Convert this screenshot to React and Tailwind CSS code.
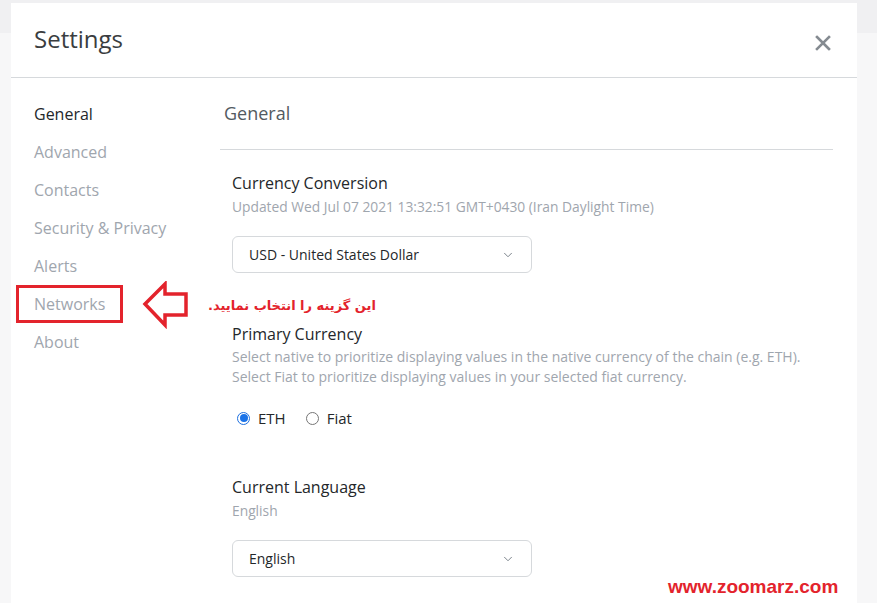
import { ChevronDown } from "lucide-react";

const navItems = [
  "General",
  "Advanced",
  "Contacts",
  "Security & Privacy",
  "Alerts",
  "Networks",
  "About",
];

const Select = ({ value }) => (
  <div className="w-[300px] h-[37px] border border-[#d6d9dc] rounded-md flex items-center justify-between pl-4 pr-4 bg-white">
    <span className="text-[14px] text-[#24272a]">{value}</span>
    <ChevronDown size={14} strokeWidth={1.5} className="text-[#6a737d]" />
  </div>
);

const Arrow = () => (
  <svg width="50" height="48" viewBox="0 0 50 48" className="shrink-0">
    <polygon
      points="3,23 23,3 23,13 44,13 44,34 23,34 23,44"
      fill="white"
      stroke="#e3232c"
      strokeWidth="3.5"
      strokeLinejoin="miter"
    />
  </svg>
);

export default function App() {
  return (
    <div
      className="w-[877px] h-[603px] overflow-hidden bg-[#f7f7f8] relative"
      style={{ fontFamily: "'Open Sans', sans-serif" }}
    >
      <div className="h-[33px] bg-[#f0f0f2] absolute inset-x-0 top-0" />
      <div className="relative ml-[11px] mt-[3px] w-[846px] h-[600px] bg-white">
        {/* Header */}
        <div className="h-[75px] border-b border-[#d6d9dc] flex items-center justify-between pl-[23px] pr-[26px]">
          <h1 className="text-[24px] leading-[30px] text-[#3a3d40] pb-[2px]">Settings</h1>
          <svg width="16" height="16" viewBox="0 0 16 16" className="mt-[5px]">
            <path
              d="M2 2 L14 14 M14 2 L2 14"
              stroke="#858b91"
              strokeWidth="2.6"
              strokeLinecap="square"
            />
          </svg>
        </div>

        <div className="flex">
          {/* Sidebar */}
          <div className="w-[209px] pl-[23px] pt-[17px] flex flex-col">
            {navItems.map((item, i) => (
              <div key={item} className="h-[38px] flex items-center relative">
                <span
                  className={`text-[16px] leading-[20px] ${
                    i === 0 ? "text-[#24272a]" : "text-[#9fa6ae]"
                  }`}
                >
                  {item}
                </span>
                {item === "Networks" && (
                  <>
                    <div className="absolute left-[-18px] top-[0px] w-[107px] h-[38px] border-[3px] border-[#e3232c]" />
                    <div className="absolute left-[108px] top-[-4px] flex items-center gap-[16px]">
                      <Arrow />
                      <span
                        dir="rtl"
                        className="text-[13px] font-bold text-[#e3232c] whitespace-nowrap mt-[2px]"
                        style={{ fontFamily: "'DejaVu Sans', sans-serif" }}
                      >
                        این گزینه را انتخاب نمایید.
                      </span>
                    </div>
                  </>
                )}
              </div>
            ))}
          </div>

          {/* Content */}
          <div className="flex-1 pr-[24px]">
            <div className="h-[72px] border-b border-[#d6d9dc] flex items-center pl-[4px]">
              <h2 className="text-[18px] text-[#535a61]">General</h2>
            </div>

            <div className="pl-[12px] pt-[23px]">
              <div className="text-[16px] text-[#24272a] leading-[20px]">
                Currency Conversion
              </div>
              <div className="text-[13.8px] text-[#9fa6ae] leading-[20px] mt-[4px]">
                Updated Wed Jul 07 2021 13:32:51 GMT+0430 (Iran Daylight Time)
              </div>
              <div className="mt-[19px]">
                <Select value="USD - United States Dollar" />
              </div>

              <div className="mt-[51px] text-[16px] text-[#24272a] leading-[20px]">
                Primary Currency
              </div>
              <div className="text-[14px] text-[#9fa6ae] leading-[20px] mt-[3px]">
                Select native to prioritize displaying values in the native
                currency of the chain (e.g. ETH).
                <br />
                Select Fiat to prioritize displaying values in your selected
                fiat currency.
              </div>
              <div className="mt-[21px] flex items-center gap-[8px] pl-[5px] h-[20px]">
                <span className="w-[13px] h-[13px] rounded-full border border-[#1c6fe0] flex items-center justify-center">
                  <span className="w-[8px] h-[8px] rounded-full bg-[#1a73e8]" />
                </span>
                <span className="text-[15px] text-[#24272a]">ETH</span>
                <span className="ml-[12px] w-[13px] h-[13px] rounded-full border border-[#767676]" />
                <span className="text-[15px] text-[#24272a]">Fiat</span>
              </div>

              <div className="mt-[49px] text-[16px] text-[#24272a] leading-[20px]">
                Current Language
              </div>
              <div className="text-[13.8px] text-[#9fa6ae] leading-[20px] mt-[4px]">
                English
              </div>
              <div className="mt-[19px]">
                <Select value="English" />
              </div>
            </div>
          </div>
        </div>

        <div
          className="absolute left-[657px] top-[570px] text-[19px] font-bold text-[#e3232c]"
          style={{ fontFamily: "'Liberation Sans', Arial, sans-serif" }}
        >
          www.zoomarz.com
        </div>
      </div>
    </div>
  );
}
